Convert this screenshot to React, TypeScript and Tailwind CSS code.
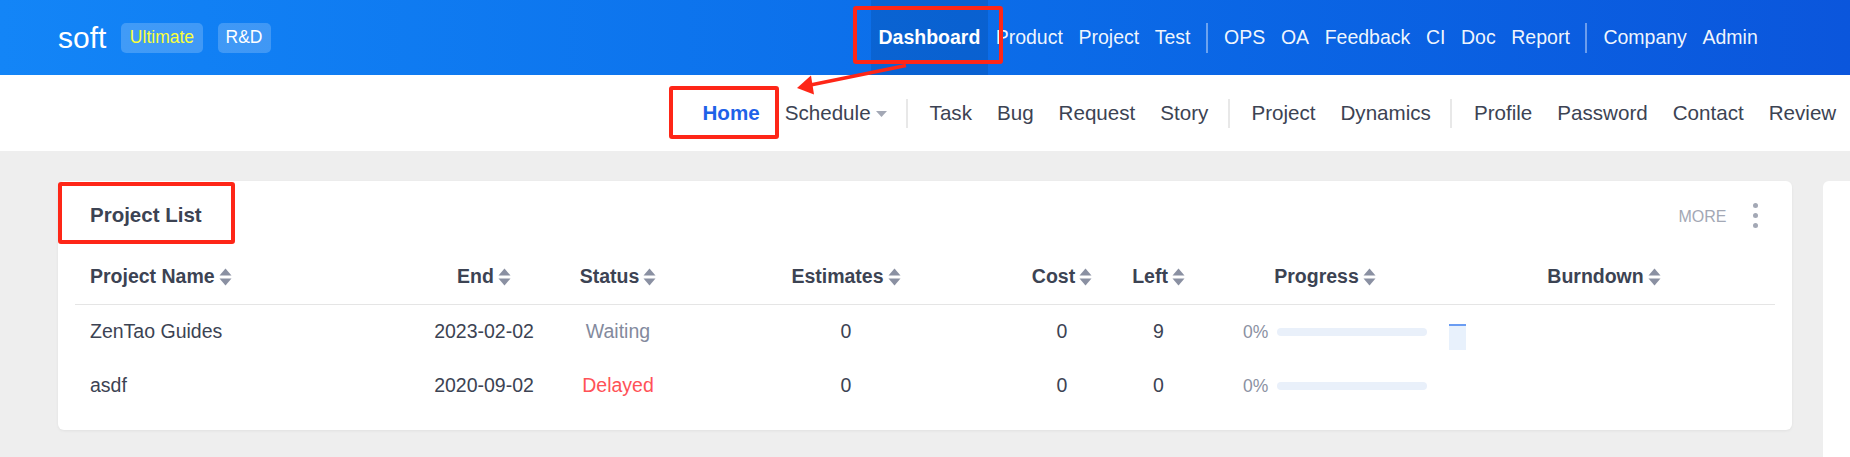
import React from 'react';

const topNav = ['Product', 'Project', 'Test', '|', 'OPS', 'OA', 'Feedback', 'CI', 'Doc', 'Report', '|', 'Company', 'Admin'];
const subNav = ['|', 'Task', 'Bug', 'Request', 'Story', '|', 'Project', 'Dynamics', '|', 'Profile', 'Password', 'Contact', 'Review'];

const columns = [
  { label: 'Project Name', w: 'w-[325px]', align: 'justify-start pl-[15px]' },
  { label: 'End', w: 'w-[168px]', align: 'justify-center' },
  { label: 'Status', w: 'w-[100px]', align: 'justify-center' },
  { label: 'Estimates', w: 'w-[356px]', align: 'justify-center' },
  { label: 'Cost', w: 'w-[76px]', align: 'justify-center' },
  { label: 'Left', w: 'w-[117px]', align: 'justify-center' },
  { label: 'Progress', w: 'w-[216px]', align: 'justify-center' },
  { label: 'Burndown', w: 'w-[342px]', align: 'justify-center' },
];

const projects = [
  { name: 'ZenTao Guides', end: '2023-02-02', status: 'Waiting', estimates: 0, cost: 0, left: 9, progress: 0, chart: true },
  { name: 'asdf', end: '2020-09-02', status: 'Delayed', estimates: 0, cost: 0, left: 0, progress: 0, chart: false },
];

const SortIcon = () => (
  <svg width="13" height="18" viewBox="0 0 13 18" className="ml-[4px] shrink-0">
    <polygon points="6.5,0.5 12.5,7.5 0.5,7.5" fill="#8a90a2" />
    <polygon points="0.5,10.5 12.5,10.5 6.5,17.5" fill="#8a90a2" />
  </svg>
);

const App: React.FC = () => {
  return (
    <div className="relative w-[1850px] h-[457px] overflow-hidden bg-[#eeeeee] font-['Liberation_Sans',Arial,sans-serif]">
      {/* Top header */}
      <header className="h-[75px] flex items-center bg-linear-to-r from-[#1385f7] to-[#0b56dc] pl-[58px] whitespace-nowrap">
        <div className="w-[212px] shrink-0 flex items-center">
          <span className="text-[30px] leading-none text-white">soft</span>
          <span className="ml-[15px] h-[30px] px-[8.5px] flex items-center rounded-[5px] bg-white/20 text-[17.5px] text-[#fbff3a]">Ultimate</span>
          <span className="ml-[15px] h-[30px] px-[8px] flex items-center rounded-[5px] bg-white/20 text-[17.5px] text-white">R&amp;D</span>
        </div>
        <nav className="ml-[601px] h-full flex items-center text-[19.5px]">
          <div className="relative h-full px-[7.5px] flex items-center bg-black/10 font-bold text-white">
            Dashboard
            <div className="absolute -left-[18px] -right-[15px] top-[6px] bottom-[11px] border-[4px] border-[#fe2617] rounded-[3px]" />
          </div>
          {topNav.map((item, i) =>
            item === '|' ? (
              <span key={i} className="w-[2px] h-[30px] bg-white/40 ml-[7.5px] mr-[8.5px]" />
            ) : (
              <span key={i} className="px-[7.8px] text-white/95">{item}</span>
            )
          )}
        </nav>
      </header>

      {/* Sub navigation */}
      <div className="h-[76px] bg-white flex items-center pl-[690px] whitespace-nowrap text-[20.6px] text-[#3c4353]">
        <div className="relative h-full px-[12.5px] flex items-center font-bold text-[#1f62e8]">
          Home
          <div className="absolute -left-[21px] -right-[7px] top-[11px] bottom-[12px] border-[4px] border-[#fe2617] rounded-[3px]" />
        </div>
        <div className="h-full pl-[12.5px] pr-[12.5px] flex items-center">
          Schedule
          <svg width="11" height="6" viewBox="0 0 11 6" className="ml-[5px] mt-[1px]">
            <polygon points="0,0 11,0 5.5,6" fill="#a3a8b5" />
          </svg>
        </div>
        {subNav.map((item, i) =>
          item === '|' ? (
            <span key={i} className="w-[2px] h-[29px] bg-[#e8e8e8] ml-[7px] mr-[9px]" />
          ) : (
            <span key={i} className="px-[12.5px]">{item}</span>
          )
        )}
      </div>

      {/* Content */}
      <main className="flex gap-[31px] pl-[58px] pt-[30px]">
        <section className="w-[1734px] h-[249px] shrink-0 bg-white rounded-[6px] shadow-[0_1px_3px_rgba(0,0,0,0.06)]">
          <div className="relative h-[69px] pl-[32px] pr-[34.5px] flex items-center justify-between">
            <h3 className="text-[20.5px] font-bold text-[#3c4353]">Project List</h3>
            <div className="absolute left-0 top-[1px] w-[177px] h-[62px] border-[4px] border-[#fe2617] rounded-[3px]" />
            <div className="flex items-center">
              <span className="text-[16px] text-[#a3a8b5] mt-[3px]">MORE</span>
              <div className="ml-[26.5px] flex flex-col gap-[5.5px]">
                <span className="w-[4.5px] h-[4.5px] rounded-full bg-[#a3a8b5]" />
                <span className="w-[4.5px] h-[4.5px] rounded-full bg-[#a3a8b5]" />
                <span className="w-[4.5px] h-[4.5px] rounded-full bg-[#a3a8b5]" />
              </div>
            </div>
          </div>

          <div className="px-[17px]">
            <div className="h-[55px] flex items-center border-b border-[#e5e5e5] text-[19.5px] font-bold text-[#3c4353]">
              {columns.map(c => (
                <div key={c.label} className={`${c.w} shrink-0 flex items-center ${c.align}`}>
                  {c.label}
                  <SortIcon />
                </div>
              ))}
            </div>
            {projects.map(p => (
              <div key={p.name} className="h-[54px] flex items-center text-[19.5px] text-[#3c4353]">
                <div className="w-[325px] shrink-0 pl-[15px]">{p.name}</div>
                <div className="w-[168px] shrink-0 text-center">{p.end}</div>
                <div className={`w-[100px] shrink-0 text-center ${p.status === 'Delayed' ? 'text-[#ff5257]' : 'text-[#838a9d]'}`}>{p.status}</div>
                <div className="w-[356px] shrink-0 text-center">{p.estimates}</div>
                <div className="w-[76px] shrink-0 text-center">{p.cost}</div>
                <div className="w-[117px] shrink-0 text-center">{p.left}</div>
                <div className="w-[216px] shrink-0 pl-[26px] flex items-center">
                  <span className="text-[17.5px] text-[#8b91a2]">{p.progress}%</span>
                  <div className="ml-[8.5px] w-[150px] h-[8px] rounded-full bg-[#e9f0fa]" />
                </div>
                <div className="w-[342px] shrink-0 pl-[16px] flex items-center">
                  {p.chart && <div className="mt-[10px] w-[17px] h-[26px] bg-[#e8f1fc] border-t-2 border-[#6a9cf2]" />}
                </div>
              </div>
            ))}
          </div>
        </section>
        <section className="w-[400px] h-[320px] shrink-0 bg-white rounded-[6px]" />
      </main>

      {/* Annotation arrow */}
      <svg className="absolute left-0 top-0 pointer-events-none" width="1850" height="457">
        <line x1="808" y1="85.5" x2="906" y2="65.5" stroke="#fe2617" strokeWidth="3.5" />
        <polygon points="797,88 811,75.5 814,94.5" fill="#fe2617" />
      </svg>
    </div>
  );
};

export default App;
